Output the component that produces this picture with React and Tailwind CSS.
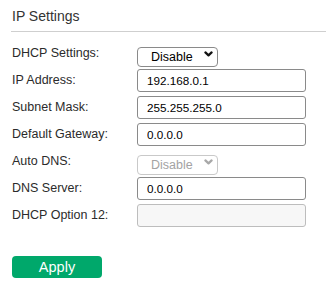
import React from "react";

function Chevron({ disabled }) {
  return (
    <svg
      className="pointer-events-none absolute right-[5px] top-1/2 -translate-y-1/2"
      width="9"
      height="6"
      viewBox="0 0 9 6"
    >
      <path
        d="M1.4 1.4 L4.5 4.4 L7.6 1.4"
        fill="none"
        stroke={disabled ? "#a8a8a8" : "#111"}
        strokeWidth="2.2"
        strokeLinecap="round"
        strokeLinejoin="round"
      />
    </svg>
  );
}

function Select({ disabled }) {
  return (
    <div className="relative w-[81px] h-[20px]">
      <select
        disabled={disabled}
        defaultValue="Disable"
        className={
          "appearance-none w-full h-full rounded-[4px] border pl-[13px] pr-[20px] text-[12.5px] leading-none outline-none " +
          (disabled
            ? "border-[#c9c9c9] text-[#a3a3a3] bg-white"
            : "border-[#8a8a8a] text-black bg-white")
        }
        style={{ fontFamily: '"Liberation Sans", Arial, sans-serif' }}
      >
        <option>Disable</option>
        <option>Enable</option>
      </select>
      <Chevron disabled={disabled} />
    </div>
  );
}

function TextInput({ value, disabled }) {
  return (
    <input
      type="text"
      defaultValue={value}
      disabled={disabled}
      className={
        "w-[169px] h-[23px] rounded-[3px] border px-[9px] text-[11.7px] outline-none " +
        (disabled
          ? "border-[#bdbdbd] bg-[#f7f7f7]"
          : "border-[#8a8a8a] bg-white text-black")
      }
      style={{ fontFamily: '"Liberation Sans", Arial, sans-serif' }}
    />
  );
}

function Row({ label, children }) {
  return (
    <div className="flex h-[27px] items-center">
      <div className="w-[125px] text-[12.5px] text-[#2b2b2b]">{label}</div>
      {children}
    </div>
  );
}

export default function App() {
  return (
    <div
      className="w-[326px] h-[288px] bg-white overflow-hidden"
      style={{ fontFamily: '"Liberation Sans", Arial, sans-serif' }}
    >
      <div className="pl-[12px] pt-[6px] h-[31px] text-[14px] leading-[20px] text-[#333]">
        IP Settings
      </div>
      <div className="ml-[11px] h-px bg-[#cfcfcf]" />
      <div className="px-[12px] pt-[8px] flex flex-col">
        <Row label="DHCP Settings:">
          <Select />
        </Row>
        <Row label="IP Address:">
          <TextInput value="192.168.0.1" />
        </Row>
        <Row label="Subnet Mask:">
          <TextInput value="255.255.255.0" />
        </Row>
        <Row label="Default Gateway:">
          <TextInput value="0.0.0.0" />
        </Row>
        <Row label="Auto DNS:">
          <Select disabled />
        </Row>
        <Row label="DNS Server:">
          <TextInput value="0.0.0.0" />
        </Row>
        <Row label="DHCP Option 12:">
          <TextInput value="" disabled />
        </Row>
        <div className="mt-[26px]">
          <button className="w-[90px] h-[22px] rounded-[4px] bg-[#00a86b] text-white text-[14.5px] leading-none">
            Apply
          </button>
        </div>
      </div>
    </div>
  );
}
